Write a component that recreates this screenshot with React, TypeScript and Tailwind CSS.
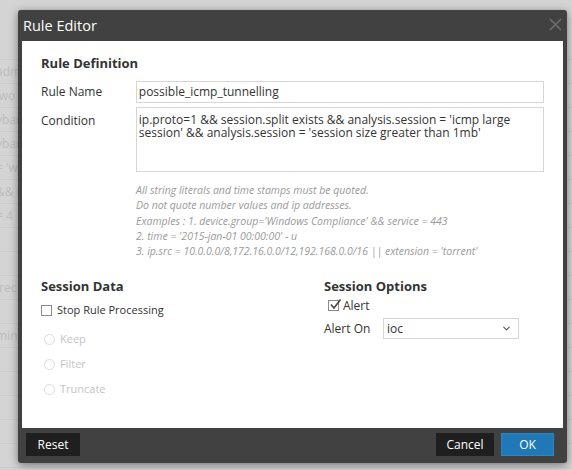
import { ChevronDown } from 'lucide-react';

const bgRows = ['', 'admin', "'wo", 'ybar', 'ybar', "= 'w", '&& h', '= 4', '', '', 'irec', '', 'min', '', '', '', '', ''];

function CheckBox({ checked }: { checked?: boolean }) {
  return (
    <span className="relative inline-block w-[11px] h-[11px] border border-[#8a8a8a] bg-white shrink-0">
      {checked && (
        <svg className="absolute -top-[3px] left-[0px]" width="13" height="13" viewBox="0 0 13 13">
          <path d="M2 6.5 L5 10 L11.5 1.5" fill="none" stroke="#444" strokeWidth="1.6" />
        </svg>
      )}
    </span>
  );
}

function Radio({ label }: { label: string }) {
  return (
    <div className="flex items-center h-[18px] pl-[3px] gap-[5px]">
      <span className="w-[11px] h-[11px] rounded-full border border-[#dcdcdc]" />
      <span className="text-[11px] text-[#c4c4c4]">{label}</span>
    </div>
  );
}

export default function App() {
  return (
    <div className="relative w-[572px] h-[470px] overflow-hidden bg-[#d4d4d4]" style={{ fontFamily: '"Open Sans", "Noto Sans", sans-serif' }}>
      {/* backdrop table */}
      <div className="flex flex-col pt-[36px]">
        {bgRows.map((t, i) => (
          <div key={i} className="h-[24px] border-b border-[#cbcbcb] flex items-center overflow-hidden whitespace-nowrap">
            <span className="-ml-[4px] text-[12px] text-[#bcbcbc]">{t}</span>
          </div>
        ))}
      </div>

      {/* dialog */}
      <div className="absolute left-[18px] top-[10px] w-[549px] h-[453px] bg-[#414141] rounded-[3px] shadow-[0_2px_8px_rgba(0,0,0,0.45)] flex flex-col">
        <div className="h-[31px] flex items-center justify-between pl-[5px] pr-[5px]">
          <span className="text-[14.5px] text-white">Rule Editor</span>
          <svg width="13" height="13" viewBox="0 0 13 13" className="mb-[2px]">
            <path d="M1 1 L12 12 M12 1 L1 12" stroke="#6e6e6e" strokeWidth="1.6" />
          </svg>
        </div>

        <div className="mx-[4px] h-[387px] bg-white text-[#333] pl-[19px] pr-[19px] pt-[13px]">
          <div className="text-[13px] font-bold leading-[18px] text-[#333]">Rule Definition</div>

          <div className="flex items-center mt-[9px]">
            <span className="w-[95px] text-[12px]">Rule Name</span>
            <div className="w-[409px] h-[22px] border border-[#d6d6d6] flex items-center px-[2px] text-[12px]">possible_icmp_tunnelling</div>
          </div>

          <div className="flex items-start mt-[4px]">
            <span className="w-[95px] text-[12px] pt-[5px]">Condition</span>
            <div className="w-[409px] h-[65px] border border-[#d6d6d6] px-[2px] pt-[6px] text-[12px] leading-[12.5px]">
              ip.proto=1 &amp;&amp; session.split exists &amp;&amp; analysis.session = 'icmp large session' &amp;&amp; analysis.session = 'session size greater than 1mb'
            </div>
          </div>

          <div className="ml-[95px] mt-[11px] text-[10.5px] italic leading-[15.3px] text-[#9a9a9a]">
            <div>All string literals and time stamps must be quoted.</div>
            <div>Do not quote number values and ip addresses.</div>
            <div>Examples : 1. device.group='Windows Compliance' &amp;&amp; service = 443</div>
            <div>2. time = '2015-jan-01 00:00:00' - u</div>
            <div>3. ip.src = 10.0.0.0/8,172.16.0.0/12,192.168.0.0/16 || extension = 'torrent'</div>
          </div>

          <div className="grid grid-cols-[283px_1fr] mt-[18px]">
            <div>
              <div className="text-[13px] font-bold leading-[18px]">Session Data</div>
              <div className="flex items-center gap-[5px] h-[18px] mt-[6px]">
                <CheckBox />
                <span className="text-[11px]">Stop Rule Processing</span>
              </div>
              <div className="flex flex-col gap-[7px] mt-[11px]">
                <Radio label="Keep" />
                <Radio label="Filter" />
                <Radio label="Truncate" />
              </div>
            </div>
            <div>
              <div className="text-[13px] font-bold leading-[18px]">Session Options</div>
              <div className="flex items-center gap-[4px] h-[15px] pl-[4px] mt-[3px]">
                <CheckBox checked />
                <span className="text-[12px]">Alert</span>
              </div>
              <div className="flex items-center mt-[5px]">
                <span className="w-[59px] text-[12px]">Alert On</span>
                <div className="w-[136px] h-[21px] border border-[#d6d6d6] flex items-center justify-between pl-[3px] pr-[6px] text-[12px]">
                  <span>ioc</span>
                  <ChevronDown size={11} strokeWidth={2.4} color="#555" />
                </div>
              </div>
            </div>
          </div>
        </div>

        <div className="flex items-center justify-between pl-[8px] pr-[13px] mt-[5px]">
          <button className="w-[54px] h-[23px] bg-[#1f1f1f] text-white text-[12px]">Reset</button>
          <div className="flex gap-[7px]">
            <button className="w-[58px] h-[23px] bg-[#1f1f1f] text-white text-[12px]">Cancel</button>
            <button className="w-[53px] h-[23px] bg-[#2079b6] border border-[#2a88c8] text-white text-[12px]">OK</button>
          </div>
        </div>
      </div>
    </div>
  );
}
